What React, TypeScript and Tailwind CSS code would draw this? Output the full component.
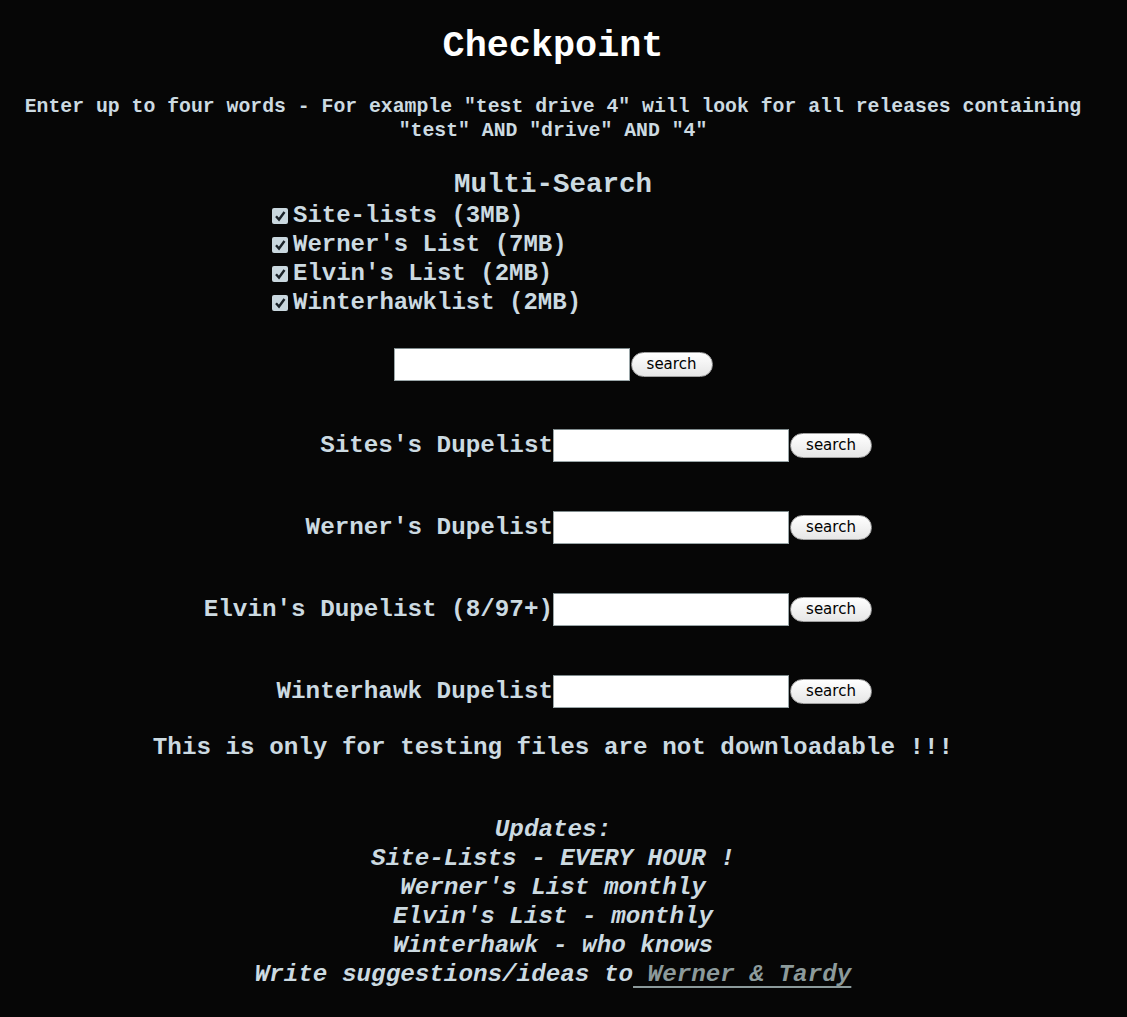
const MONO = "font-['Liberation_Mono','Courier_New',monospace]";

const lists = [
  "Site-lists (3MB)",
  "Werner's List (7MB)",
  "Elvin's List (2MB)",
  "Winterhawklist (2MB)",
];

const dupelists = [
  "Sites's Dupelist",
  "Werner's Dupelist",
  "Elvin's Dupelist (8/97+)",
  "Winterhawk Dupelist",
];

function CheckBox() {
  return (
    <span className="inline-flex h-[16px] w-[16px] items-center justify-center rounded-[2px] bg-[#c9d7de]">
      <svg width="12" height="12" viewBox="0 0 12 12">
        <path d="M2 6.2 L5 9.5 L10.5 2" fill="none" stroke="#1a2228" strokeWidth="2.4" />
      </svg>
    </span>
  );
}

function SearchBox() {
  return (
    <div className="flex items-center">
      <input
        type="text"
        className="h-[33px] w-[236px] border border-[#9aa6a8] border-t-[#7e8a8c] bg-white outline-none"
      />
      <button className="ml-[1px] h-[25px] w-[82px] rounded-full border border-[#a0a0a0] bg-gradient-to-b from-white to-[#e6e6e6] font-['DejaVu_Sans',sans-serif] text-[15px] font-normal not-italic leading-none text-black">
        search
      </button>
    </div>
  );
}

export default function App() {
  return (
    <div className={`min-h-screen w-full bg-[#060606] ${MONO} font-bold text-[#ccdae1]`}>
      <div className="w-[1106px] pt-[24px] pb-[20px] text-center">
        {/* Header */}
        <h1 className="text-[36.8px] leading-[44px] text-white">Checkpoint</h1>
        <p className="mt-[27px] px-[20px] text-[19.8px] leading-[24px]">
          Enter up to four words - For example "test drive 4" will look for all releases containing "test" AND "drive" AND "4"
        </p>

        {/* Multi search */}
        <div className="mx-auto mt-[26px] w-[562px]">
          <h3 className="text-[27.5px] leading-[32px]">Multi-Search</h3>
          <div className="flex flex-col items-start">
            {lists.map((l) => (
              <label key={l} className="flex h-[29px] items-center gap-[5px] text-[24px]">
                <CheckBox />
                <span className="whitespace-pre">{l}</span>
              </label>
            ))}
          </div>
        </div>

        <div className="mt-[31px] flex justify-center">
          <SearchBox />
        </div>

        {/* Dupelists */}
        <div className="mt-[48px] flex flex-col gap-[49px]">
          {dupelists.map((d) => (
            <div key={d} className="grid grid-cols-2 items-center">
              <span className="whitespace-pre text-right text-[24.25px] leading-[29px]">{d}</span>
              <SearchBox />
            </div>
          ))}
        </div>

        <p className="mt-[25px] text-[24.25px] leading-[29px]">
          This is only for testing files are not downloadable !!!
        </p>

        {/* Updates */}
        <div className="mt-[53px] text-[24.25px] italic leading-[29px]">
          <p>Updates:</p>
          <p className="whitespace-pre">Site-Lists - EVERY HOUR !</p>
          <p>Werner's List monthly</p>
          <p>Elvin's List - monthly</p>
          <p>Winterhawk - who knows</p>
          <p className="whitespace-pre">
            Write suggestions/ideas to
            <a href="#" className="text-[#8c9a9b] underline decoration-2 underline-offset-[5px]">
              {" Werner & Tardy"}
            </a>
          </p>
        </div>
      </div>
    </div>
  );
}
